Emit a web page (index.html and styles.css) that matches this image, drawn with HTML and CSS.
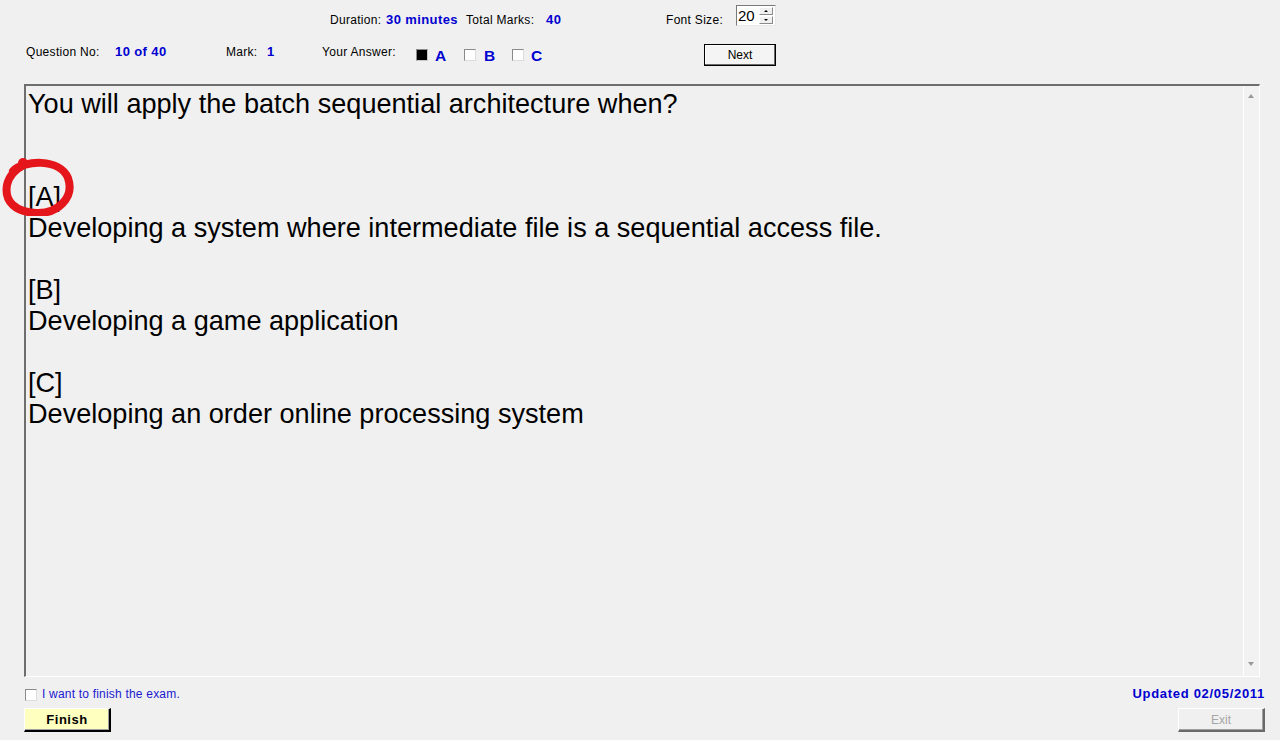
FILE: index.html
```html
<!DOCTYPE html>
<html lang="en">
<head>
<meta charset="utf-8">
<title>Exam</title>
<link rel="stylesheet" href="styles.css">
</head>
<body>
<div class="app">
  <header class="toolbar">
    <div class="row row1">
      <span class="lbl w-dur">Duration:</span>
      <span class="val w-min">30 minutes</span>
      <span class="lbl w-tot">Total Marks:</span>
      <span class="val w-40">40</span>
      <span class="lbl w-fs">Font Size:</span>
      <div class="spin">
        <span class="spin-val">20</span>
        <div class="spin-btns">
          <span class="spin-btn"><i class="tri-up"></i></span>
          <span class="spin-btn"><i class="tri-down"></i></span>
        </div>
      </div>
    </div>
    <div class="row row2">
      <span class="lbl w-qn">Question No:</span>
      <span class="val w-qv">10 of 40</span>
      <span class="lbl w-mk">Mark:</span>
      <span class="val w-mv">1</span>
      <span class="lbl w-ya">Your Answer:</span>
      <span class="cbcell w19"><span class="cb checked"></span></span>
      <span class="ans w29">A</span>
      <span class="cbcell w20"><span class="cb"></span></span>
      <span class="ans w28">B</span>
      <span class="cbcell w19"><span class="cb"></span></span>
      <span class="ans w173">C</span>
      <button class="btn next">Next</button>
    </div>
  </header>

  <main class="qbox">
    <div class="qtext">
      <div class="line">You will apply the batch sequential architecture when?</div>
      <div class="line"></div>
      <div class="line"></div>
      <div class="line">[A]</div>
      <div class="line">Developing a system where intermediate file is a sequential access file.</div>
      <div class="line"></div>
      <div class="line">[B]</div>
      <div class="line">Developing a game application</div>
      <div class="line"></div>
      <div class="line">[C]</div>
      <div class="line">Developing an order online processing system</div>
    </div>
    <div class="scroll">
      <i class="sb-up"></i>
      <i class="sb-down"></i>
    </div>
  </main>

  <footer class="footer">
    <div class="fcol">
      <div class="finish-row">
        <span class="cb fcb"></span>
        <span class="finish-lbl">I want to finish the exam.</span>
      </div>
      <button class="btn finish">Finish</button>
    </div>
    <div class="fcol right">
      <div class="updated">Updated 02/05/2011</div>
      <button class="btn exit" disabled>Exit</button>
    </div>
  </footer>

  <svg class="mark" width="80" height="66" viewBox="0 150 80 66" aria-hidden="true">
    <path d="M 13 171 C 24 160, 60 158, 68 178 C 75 198, 57 214, 36 213 C 16 212, 4 202, 7 185 C 9 176, 16 169, 24 165" fill="none" stroke="#e5161b" stroke-width="8" stroke-linecap="round"/>
    <circle cx="23" cy="163" r="5" fill="#e5161b"/>
  </svg>
</div>
</body>
</html>
```

FILE: styles.css
```css
html, body {
  margin: 0;
  padding: 0;
  background: #f0f0f0;
}

body {
  font-family: "Liberation Sans", Arial, sans-serif;
  font-size: 12px;
  color: #000;
}

.app {
  position: relative;
  width: 1280px;
  height: 740px;
  overflow: hidden;
}

/* ---------- toolbar ---------- */
.row {
  display: flex;
  align-items: flex-start;
}

.row1 {
  height: 44px;
  padding-left: 330px;
}

.row2 {
  height: 22px;
  padding-left: 26px;
}

.lbl, .val {
  line-height: 14px;
  white-space: nowrap;
  flex: none;
}

.lbl {
  letter-spacing: 0.3px;
}

.val {
  font-size: 13px;
  font-weight: bold;
  color: #0000d0;
  letter-spacing: 0.4px;
}

.row1 .lbl, .row1 .val { margin-top: 13px; }
.row2 .lbl, .row2 .val { margin-top: 1px; }

.w-dur { width: 56px; }
.w-min { width: 80px; }
.w-tot { width: 80px; }
.w-40  { width: 120px; }
.w-fs  { width: 70px; }

.w-qn { width: 89px; }
.w-qv { width: 111px; }
.w-mk { width: 41px; }
.w-mv { width: 55px; }
.w-ya { width: 94px; }

.w19 { width: 19px; }
.w20 { width: 20px; }
.w28 { width: 28px; }
.w29 { width: 29px; }
.w173 { width: 173px; }

.cbcell {
  flex: none;
  padding-top: 5px;
}

.cb {
  display: block;
  box-sizing: border-box;
  width: 12px;
  height: 12px;
  background: #fff;
  border: 1px solid #8a8a8a;
  border-right-color: #dcdcdc;
  border-bottom-color: #dcdcdc;
}

.cb.checked {
  background: #000;
  border: 1px solid #8a8a8a;
  border-right-color: #c8c8c8;
  border-bottom-color: #c8c8c8;
}

.ans {
  flex: none;
  font-size: 15.5px;
  font-weight: bold;
  color: #0000d0;
  line-height: 18px;
  margin-top: 3px;
}

/* spin box */
.spin {
  flex: none;
  margin-top: 5px;
  box-sizing: border-box;
  width: 40px;
  height: 21px;
  background: #fff;
  border: 1px solid #7a7a7a;
  border-right-color: #e8e8e8;
  border-bottom-color: #e8e8e8;
  display: flex;
  align-items: center;
  justify-content: space-between;
  padding: 0 2px 0 1px;
}

.spin-val {
  font-size: 15px;
  line-height: 17px;
}

.spin-btns {
  display: flex;
  flex-direction: column;
  gap: 1px;
}

.spin-btn {
  box-sizing: border-box;
  width: 14px;
  height: 8px;
  background: #f0f0f0;
  border: 1px solid #fff;
  border-right-color: #8a8a8a;
  border-bottom-color: #8a8a8a;
  display: flex;
  align-items: center;
  justify-content: center;
}

.tri-up, .tri-down {
  display: block;
  width: 0;
  height: 0;
  border-left: 2px solid transparent;
  border-right: 2px solid transparent;
}
.tri-up { border-bottom: 2px solid #000; }
.tri-down { border-top: 2px solid #000; }

/* buttons */
.btn {
  font-family: "Liberation Sans", Arial, sans-serif;
  font-size: 12px;
  box-sizing: border-box;
  margin: 0;
  padding: 0;
  cursor: default;
}

.next {
  flex: none;
  width: 72px;
  height: 22px;
  background: #f4f4f4;
  border: 1px solid #000;
  box-shadow: inset -1px -1px 0 #6a6a6a, inset 1px 1px 0 #fff;
  color: #000;
}

/* ---------- question box ---------- */
.qbox {
  margin: 18px 0 0 24px;
  box-sizing: border-box;
  width: 1236px;
  height: 593px;
  display: flex;
  border-top: 2px solid #6e6e6e;
  border-left: 2px solid #6e6e6e;
  border-right: 1px solid #fff;
  border-bottom: 1px solid #fff;
  background: #f0f0f0;
}

.qtext {
  flex: 1;
  padding: 2px 0 0 2px;
  font-size: 27.1px;
  line-height: 31px;
  color: #000;
  white-space: nowrap;
}

.line {
  height: 31px;
}

.scroll {
  position: relative;
  flex: none;
  width: 15px;
  border-left: 1px solid #fff;
  background: #f2f2f2;
}

.sb-up, .sb-down {
  position: absolute;
  left: 4px;
  width: 0;
  height: 0;
  border-left: 3.5px solid transparent;
  border-right: 3.5px solid transparent;
}
.sb-up { top: 8px; border-bottom: 4px solid #9a9a9a; }
.sb-down { bottom: 10px; border-top: 4px solid #9a9a9a; }

/* ---------- footer ---------- */
.footer {
  display: flex;
  justify-content: space-between;
  padding: 10px 15px 0 24px;
}

.fcol {
  display: flex;
  flex-direction: column;
  align-items: flex-start;
}

.fcol.right {
  align-items: flex-end;
}

.finish-row {
  display: flex;
  align-items: center;
  height: 14px;
  padding-left: 1px;
}

.fcb {
  margin-top: 1px;
}

.finish-lbl {
  margin-left: 5px;
  line-height: 14px;
  color: #1a1ad0;
  letter-spacing: 0.2px;
}

.updated {
  line-height: 14px;
  font-size: 13px;
  font-weight: bold;
  color: #0000d0;
  letter-spacing: 0.7px;
}

.finish {
  margin-top: 7px;
  width: 87px;
  height: 24px;
  background: #ffffc0;
  font-weight: bold;
  font-size: 13px;
  letter-spacing: 0.5px;
  color: #000;
  border: 1px solid #fff;
  border-right: 2px solid #000;
  border-bottom: 2px solid #000;
  box-shadow: inset -1px -1px 0 #a0a0a0;
}

.exit {
  margin-top: 7px;
  width: 87px;
  height: 24px;
  background: #f0f0f0;
  color: #a6a6a6;
  border: 1px solid #fff;
  border-right: 2px solid #6a6a6a;
  border-bottom: 2px solid #6a6a6a;
  box-shadow: inset -1px -1px 0 #a0a0a0;
}

/* annotation overlay */
.mark {
  position: absolute;
  left: 0;
  top: 150px;
  pointer-events: none;
}
```
